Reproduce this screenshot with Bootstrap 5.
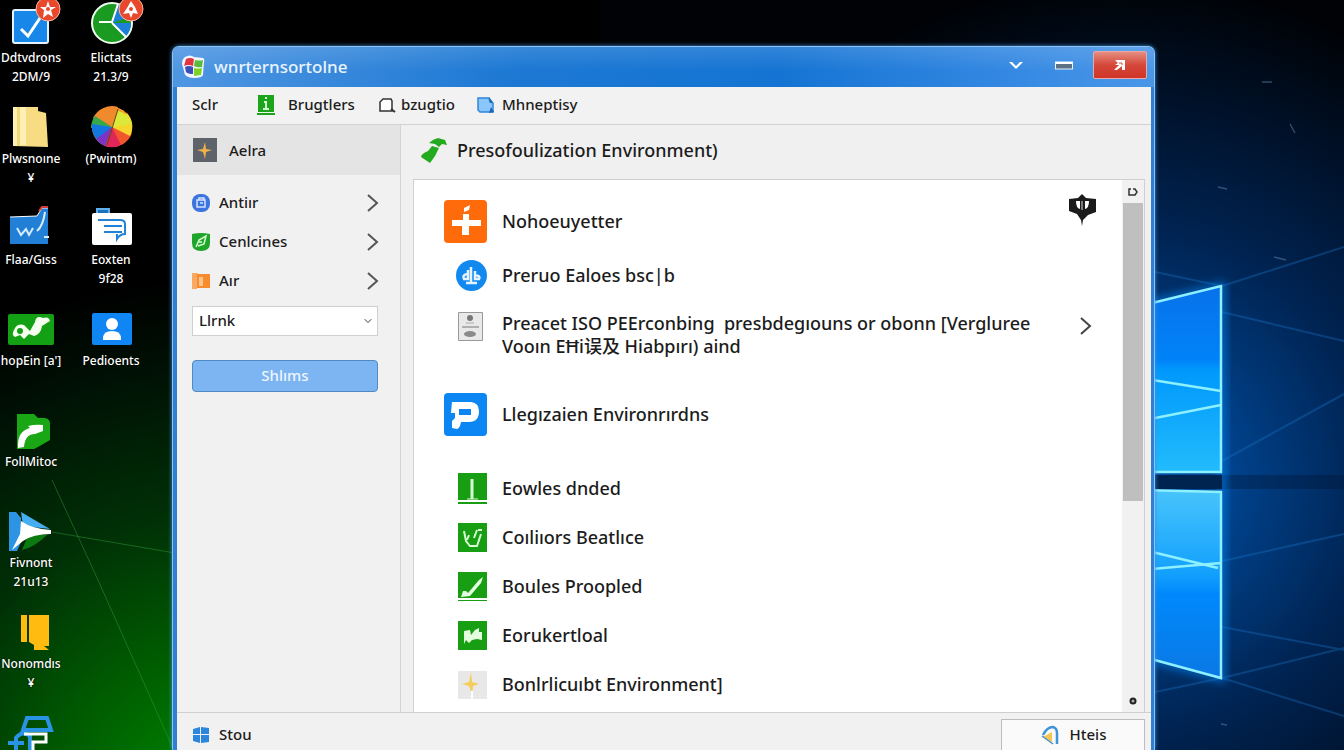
<!DOCTYPE html>
<html lang="en">
<head>
<meta charset="utf-8">
<meta name="viewport" content="width=device-width, initial-scale=1">
<title>Presentation Environment</title>
<link href="https://cdn.jsdelivr.net/npm/bootstrap@5.3.0/dist/css/bootstrap.min.css" rel="stylesheet">
<style>
  body { font-family: "Noto Sans", "Noto Sans CJK SC", sans-serif; background: #000; color: #1c1c1c; }
  .desktop { height: 100vh; }
  .wallpaper { inset: 0; z-index: 0; }
  .shortcuts { display: grid; grid-template-columns: 62px 98px; grid-auto-rows: 101px; width: 160px; z-index: 1; }
  .shortcut { padding-top: 5px; color: #fff; font-size: 12px; line-height: 19px; font-weight: 500; text-shadow: 0 0 2px #000; white-space: nowrap; grid-column: 1; }
  .shortcut.second { grid-column: 2; }
  .shortcut svg { width: 54px; height: 46px; margin-bottom: -3px; flex: none; overflow: visible; }
  .app-window { left: 172px; right: 189px; top: 46px; bottom: 0; z-index: 2; border: 1px solid #8fc3f3; border-bottom: 0; border-radius: 7px 7px 0 0; background: #2f7fd2; padding: 0 3px 0 4px; box-shadow: 0 0 4px #3a8fe0; }
  .titlebar { height: 40px; margin: 0 -3px 0 -4px; padding: 0 7px 0 9px; border-radius: 6px 6px 0 0; color: #e9f4ff; font-size: 17px; font-weight: 500;
    background: linear-gradient(180deg, rgba(255,255,255,.12), rgba(255,255,255,0) 60%), linear-gradient(90deg, #4f96e2, #1c78d3 35%, #1574d3 62%, #3488e2 85%, #4a97e8); }
  .wbtn { border: 0; background: none; padding: 0; height: 28px; margin-bottom: 4px; display: flex; align-items: center; justify-content: center; }
  .wbtn.min, .wbtn.max { width: 48px; }
  .wbtn.shut { width: 54px; margin-left: 5px; border: 1px solid #e9a9a9; border-radius: 2px; background: linear-gradient(#e58d80, #d5483a 50%, #cf3427); }
  .menubar { height: 38px; background: #f2f2f2; border-bottom: 1px solid #d2d2d2; font-size: 15px; font-weight: 500; padding: 0 0 2px 15px; }
  .menubar a { color: #1c1c1c; text-decoration: none; display: flex; align-items: center; }
  .m-first { width: 65px; }
  .m-second { width: 122px; gap: 13px; }
  .m-third { width: 98px; gap: 5px; }
  .m-fourth { gap: 7px; }
  .side { width: 224px; background: #f1f1f1; border-right: 1px solid #d4d4d4; font-size: 15px; font-weight: 500; }
  .side-title { height: 50px; background: #e4e4e4; padding-left: 16px; gap: 12px; margin-bottom: 8px; }
  .side-link { height: 39px; padding: 0 21px 0 14px; gap: 8px; color: #1c1c1c; text-decoration: none; }
  .side-form { padding: 6px 22px 0 15px; }
  .side-form .form-select { height: 30px; border-radius: 0; border-color: #cfcfcf; font-size: 15px; font-weight: 500; line-height: 20px; padding: 0 24px 2px 6px; background-color: #fff; background-size: 8px 8px; background-position: right 5px center; color: #1c1c1c; }
  .side-form .btn { margin-top: 24px; height: 32px; border-radius: 4px; border: 1px solid #4f8ac4; background: #7db5f2; color: #eef6ff; font-size: 15px; font-weight: 500; padding: 0 0 2px; }
  .main-part { background: #f0f0f0; padding-right: 6px; }
  .main-head { height: 54px; padding: 0 0 2px 19px; gap: 10px; }
  .main-head h1 { font-size: 18px; font-weight: 500; margin: 0; }
  .panel { margin-left: 12px; background: #fff; border: 1px solid #cfcfcf; border-bottom: 0; min-height: 0; }
  .entries { padding-top: 15px; font-size: 18px; line-height: 23px; font-weight: 500; overflow: hidden; }
  .entries .list-group-item { border: 0; padding: 0 26px 0 30px; display: flex; align-items: center; height: 49px; background: none; color: #1c1c1c; flex: none; }
  .entries .tall { height: 52px; }
  .entries .sub { height: 56px; }
  .entries .two { height: 64px; }
  .entries .section { height: 94px; margin-bottom: 3px; }
  .slot { width: 43px; margin-right: 15px; display: flex; justify-content: flex-end; flex: none; }
  .raised { margin-bottom: 18px; }
  .mark-pin { margin-bottom: 22px; }
  .scroller { width: 22px; background: #f1f1f1; flex: none; padding: 0 1px; }
  .scroller button { border: 0; background: none; height: 23px; padding: 0; display: flex; align-items: center; justify-content: center; }
  .thumb { flex: 298; background: #bfbfbf; }
  .track { flex: 188; }
  .statusbar { height: 38px; background: #f1f1f1; border-top: 1px solid #cfcfcf; font-size: 15px; font-weight: 500; padding: 6px 6px 0 14px; }
  .statusbar .btn { width: 144px; height: 32px; border: 1px solid #bcbcbc; border-radius: 0; background: #fafafa; font-size: 15px; font-weight: 500; padding: 0; gap: 10px; color: #1c1c1c; }
</style>
</head>
<body>
<div class="desktop position-relative overflow-hidden">

  <svg class="wallpaper position-absolute w-100 h-100" viewBox="0 0 1344 750" preserveAspectRatio="xMaxYMin slice" aria-hidden="true">
    <defs>
      <radialGradient id="gGreen" gradientUnits="userSpaceOnUse" cx="210" cy="800" r="520">
        <stop offset="0" stop-color="#008a00"/><stop offset=".25" stop-color="#006200"/><stop offset=".55" stop-color="#003006"/><stop offset=".85" stop-color="#000f04"/><stop offset="1" stop-color="#000"/>
      </radialGradient>
      <radialGradient id="gBlue" gradientUnits="userSpaceOnUse" cx="1120" cy="480" r="500">
        <stop offset="0" stop-color="#005fc0"/><stop offset=".25" stop-color="#003f86"/><stop offset=".5" stop-color="#002453"/><stop offset=".8" stop-color="#000f24"/><stop offset="1" stop-color="#000205"/>
      </radialGradient>
      <linearGradient id="gTop" x1="0" y1="0" x2="0" y2="1"><stop offset="0" stop-color="#0872ea"/><stop offset=".4" stop-color="#0083f8"/><stop offset=".45" stop-color="#0098fc"/><stop offset="1" stop-color="#22bcfc"/></linearGradient>
      <linearGradient id="gLow" x1="0" y1="0" x2="0" y2="1"><stop offset="0" stop-color="#48c4fb"/><stop offset=".45" stop-color="#12a0fd"/><stop offset=".55" stop-color="#0089fc"/><stop offset="1" stop-color="#0a78e4"/></linearGradient>
      <filter id="glow"><feGaussianBlur stdDeviation="5"/></filter>
    </defs>
    <rect width="1344" height="750" fill="#000205"/>
    <rect width="600" height="750" fill="url(#gGreen)"/>
    <rect x="600" width="744" height="750" fill="url(#gBlue)"/>
    <g stroke="#39a23c" fill="none" opacity=".45"><path d="M52 532L175 553M52 480L98 580L172 746"/></g>
    <g stroke="#1a74c8" stroke-width="2" opacity=".35"><path d="M1222 286L1344 247M1222 286L1155 272M1222 312L1344 341M1222 461L1344 394M1222 561L1344 534M1222 627L1344 650M1222 678L1344 716M1222 678L1155 692M1222 678L1344 648"/></g>
    <path d="M1140 475H1344V489H1140Z" fill="#001532" opacity=".35"/>
    <path d="M1140 307L1222 286V678L1140 656Z" fill="none" stroke="#0a8cff" stroke-width="6" filter="url(#glow)" opacity=".8"/>
    <path d="M1140 475H1222V489H1140Z" fill="#002450"/>
    <path d="M1140 307L1222 286V472H1140Z" fill="url(#gTop)"/>
    <path d="M1140 490L1222 491V678L1140 656Z" fill="url(#gLow)"/>
    <path d="M1140 306L1221 286V472H1140M1140 378L1221 391M1140 421L1221 405M1140 490L1221 492V678L1140 656M1140 549L1218 568M1140 570L1221 563" fill="none" stroke="#8cf0ff" stroke-width="2.5"/>
    <g stroke="#5c87ad" stroke-width="1.5" opacity=".5"><path d="M1262 82h10M1290 124l5 9M1218 187l9 2M1274 257l12 3M1221 724l6 1"/></g>
  </svg>

  <nav class="shortcuts position-relative" aria-label="Desktop">
    <div class="shortcut text-center d-flex flex-column align-items-center">
      <svg viewBox="0 0 54 46"><rect x="9" y="5" width="35" height="33" rx="2" fill="#1787ea" stroke="#e4f2ff" stroke-width="2"/><path d="M17 24l7 7L36 13" fill="none" stroke="#fff" stroke-width="3"/><circle cx="44" cy="4" r="12" fill="#e8492c" stroke="#f7b7a5"/><path d="M44-4l2 6h6l-5 3 2 7-5-3-5 4 1-8-4-3h6z" fill="#fff"/><circle cx="44" cy="4" r="2" fill="#e8492c"/></svg>
      <span>Ddtvdrons</span><span>2DM/9</span>
    </div>
    <div class="shortcut second text-center d-flex flex-column align-items-center">
      <svg viewBox="0 0 54 46"><circle cx="28" cy="18" r="20" fill="#1a9a20" stroke="#f0fff0" stroke-width="2"/><path d="M28 18h19A20 20 0 0 1 41 32zM28 18L34-1A20 20 0 0 1 46 12z" fill="#1d7fd8"/><path d="M15 17h13L34-1M28 18L42 32" fill="none" stroke="#fff" stroke-width="2"/><circle cx="47" cy="4" r="12" fill="#e8492c" stroke="#f7b7a5"/><path d="M47-4l4 6 3 7-5-1-2 5-2-5-6 1 4-6z" fill="#fff"/><circle cx="47" cy="4" r="2" fill="#e8492c"/></svg>
      <span>Elictats</span><span>21.3/9</span>
    </div>
    <div class="shortcut text-center d-flex flex-column align-items-center">
      <svg viewBox="0 -1 54 46"><path d="M9 0h25v4l8 2 2 34-35-1z" fill="#f7dc84"/><path d="M9 0h13v38l-13 1z" fill="#fdf0b4"/><path d="M13 0h3v39h-3z" fill="#f4d877"/></svg>
      <span>Plwsnoıne</span><span>¥</span>
    </div>
    <div class="shortcut second text-center d-flex flex-column align-items-center">
      <svg viewBox="0 -1 54 46"><g transform="translate(28 20)"><circle r="20" fill="#f2a02c"/><path d="M0 0L-19-9A21 21 0 0 1 6-20z" fill="#f08a2c"/><path d="M0 0L-21 1A21 21 0 0 1-17-11z" fill="#38a94b"/><path d="M0 0L-14 14A21 21 0 0 1-20-3z" fill="#1278e0"/><path d="M0 0L-4 20A21 21 0 0 1-16 12z" fill="#7b35c4"/><path d="M0 0L12 16A21 21 0 0 1-7 19z" fill="#e02658"/><path d="M0 0L20 6A21 21 0 0 1 9 18z" fill="#f2542c"/><path d="M0 0L15-14A20 20 0 0 1 18 9z" fill="#f6d52c"/><path d="M0 0L6-16A20 20 0 0 1 20-3z" fill="#dbe93a"/><path d="M6-18L-5 18" stroke="#5a4b12"/></g></svg>
      <span>(Pwintm)</span>
    </div>
    <div class="shortcut text-center d-flex flex-column align-items-center">
      <svg viewBox="0 -5 54 46"><path d="M6 5l27-1 5-8h6v36H6z" fill="#217fd6"/><path d="M6 5l27-1 5-8h6" fill="none" stroke="#fff"/><path d="M35-1l3-4h6" fill="none" stroke="#d43d34" stroke-width="2"/><path d="M13 16l4 7 5-6 3 6 4-7M41 0q-2 14-8 19M40 25h5" fill="none" stroke="#d7edff" stroke-width="2"/></svg>
      <span>Flaa/Gıss</span>
    </div>
    <div class="shortcut second text-center d-flex flex-column align-items-center">
      <svg viewBox="0 -5 54 46"><path d="M13 2v-5h12v5" fill="#1b70be" stroke="#5eafed" stroke-width="2"/><rect x="8" y="1" width="40" height="32" rx="2" fill="#fff"/><path d="M14 8h22q5 0 5 4v10q-5 0-8 5v-5M20 14h18M20 20h18" fill="none" stroke="#2182d6" stroke-width="2"/></svg>
      <span>Eoxten</span><span>9f28</span>
    </div>
    <div class="shortcut text-center d-flex flex-column align-items-center">
      <svg viewBox="0 -5 54 46"><rect x="4" y="1" width="46" height="31" rx="2" fill="#14a014"/><path d="M10 17q3-7 10-5l6 6 5-9q1-7 8-4 6-2 7 3l-8 5q-1 8-8 10l-5-2-5 5-4-4-5 2q-4-2-1-7z" fill="#f5fff0"/><circle cx="16" cy="18" r="3" fill="#14a014"/></svg>
      <span>hopEin [a']</span>
    </div>
    <div class="shortcut second text-center d-flex flex-column align-items-center">
      <svg viewBox="0 -5 54 46"><rect x="8" y="0" width="40" height="32" rx="2" fill="#0f86f4"/><circle cx="28" cy="11" r="6" fill="#fff"/><path d="M19 27v-3q1-6 9-6t9 6v3z" fill="#fff"/></svg>
      <span>Pedioents</span>
    </div>
    <div class="shortcut text-center d-flex flex-column align-items-center">
      <svg viewBox="0 -5 54 46"><path d="M13 0h17l4 4q12-1 12 5v17l-12 7-4 2H13z" fill="#19a716"/><path d="M14 34q-1-17 12-20l-2-2q8-2 15-1v6l-8 3q-10 0-11 13z" fill="#fff"/></svg>
      <span>FollMitoc</span>
    </div>
    <div class="shortcut text-center d-flex flex-column align-items-center">
      <svg viewBox="0 -3 54 46"><path d="M5-1h7l5 6v24l-4 9H5z" fill="#2d94e4"/><path d="M17-1l17 10 12 7-27-3z" fill="#45aef0"/><path d="M18 37q13-3 25-15l-18-2z" fill="#0b7a10"/><path d="M17 8q11 8 30 9v-4 8q-18 0-28 7l-11 9 8-16z" fill="#fff"/></svg>
      <span>Fivnont</span><span>21u13</span>
    </div>
    <div class="shortcut text-center d-flex flex-column align-items-center">
      <svg viewBox="0 -4 54 46"><path d="M17 0h6v27h-6zM25 0h20v31h-5l5 4H30v-5l-5-3z" fill="#ffbb10"/></svg>
      <span>Nonomdıs</span><span>¥</span>
    </div>
    <div class="shortcut text-center d-flex flex-column align-items-center">
      <svg viewBox="0 -6 54 46"><path d="M19 12l4-12h20l4 12zM4 25h16M12 33V20q6-8 14-2v18" fill="none" stroke="#2b93e4" stroke-width="4"/><path d="M20 16h22v8H29v12" fill="none" stroke="#fff" stroke-width="3"/></svg>
    </div>
  </nav>

  <main class="app-window position-absolute d-flex flex-column">
    <header class="titlebar d-flex align-items-center flex-shrink-0">
      <svg class="me-2" width="24" height="24" viewBox="0 0 24 24"><path d="M3 2q5-3 9 0l9 1q2 1 1 4l-1 13q-1 3-9 3Q2 23 2 16L0 9q0-5 3-7z" fill="#f2f6ff"/><path d="M4 4q4-2 8 0l-1 7q-5-2-9 0z" fill="#e3343f"/><path d="M13 5q5 1 8 0l-1 7q-4 1-8-1z" fill="#58bb3b"/><path d="M3 12q4-2 8 0v7q-5 0-7-2z" fill="#3c4fb6"/><path d="M12 13q4 1 8 0l-1 7-7 1z" fill="#7ed321"/></svg>
      <span class="flex-grow-1">wnrternsortolne</span>
      <button class="wbtn min" type="button" aria-label="Minimise"><svg width="16" height="10" viewBox="0 0 16 10"><path d="M1 2h3l4 4 4-4h3L8 9z" fill="#fff"/></svg></button>
      <button class="wbtn max" type="button" aria-label="Maximise"><svg width="18" height="9" viewBox="0 0 18 9"><rect x=".5" y="1" width="17" height="7" fill="#5c7183" stroke="#e8f3ff"/><path d="M1 2h16" stroke="#fff" stroke-width="2"/></svg></button>
      <button class="wbtn shut" type="button" aria-label="Close"><svg width="14" height="14" viewBox="0 0 14 14"><path d="M2 2h10v10H9V8l-5 4H1l5-5H2l3-2z" fill="#fff"/><path d="M6 5h3v2" fill="none" stroke="#d5483a"/></svg></button>
    </header>

    <nav class="menubar d-flex align-items-center flex-shrink-0" aria-label="Menu">
      <a class="m-first" href="#">Sclr</a>
      <a class="m-second" href="#"><svg width="18" height="20" viewBox="0 0 18 20"><path d="M1 0h16v17H1zM0 18h18v2H0z" fill="#1ba51b"/><path d="M7 7h2v7M6 14h6M8 3h2" stroke="#d9f6d4" stroke-width="2" fill="none"/></svg>Brugtlers</a>
      <a class="m-third" href="#"><svg width="17" height="16" viewBox="0 0 17 16"><path d="M4 2h8l1 2v10H1V5z" fill="#fff" stroke="#333" stroke-width="1.5"/><path d="M12 12l4 3" stroke="#333" stroke-width="2"/></svg>bzugtio</a>
      <a class="m-fourth" href="#"><svg width="18" height="18" viewBox="0 0 18 18"><path d="M1 2h11l1 4 3 1v9H3L1 14z" fill="#8ac6fb" stroke="#2f86d8" stroke-width="1.5"/><path d="M12 1l4 5-3 1zM14 11l3 5-5 1z" fill="#1767b8"/></svg>Mhneptisy</a>
    </nav>

    <div class="d-flex flex-grow-1" style="min-height:0">
      <aside class="side flex-shrink-0">
        <div class="side-title d-flex align-items-center">
          <svg width="24" height="24" viewBox="0 0 24 24"><path d="M0 0h24v24H0z" fill="#5d626b"/><path d="M12 4l1 7 6 1-6 2-1 7-2-7-6-2 6-1z" fill="#f1b248"/></svg>
          <span>Aelra</span>
        </div>
        <a class="side-link d-flex align-items-center" href="#"><svg width="20" height="20" viewBox="0 0 20 20"><rect x="1" y="1" width="18" height="18" rx="8" fill="#3d74e0"/><path d="M6 7h8v7H6zM8 7V5h5v2M9 10h3" fill="none" stroke="#d5e4ff" stroke-width="1.5"/></svg><span class="flex-grow-1">Antiır</span><svg width="12" height="18" viewBox="0 0 12 18"><path d="M1 1l9 8-9 8" fill="none" stroke="#555" stroke-width="2"/></svg></a>
        <a class="side-link d-flex align-items-center" href="#"><svg width="20" height="20" viewBox="0 0 20 20"><path d="M1 2q9-2 18 0v9q0 8-9 8t-9-8z" fill="#1fa52a"/><path d="M5 15l3-7 7-4-2 8-6 2M8 10h3" fill="none" stroke="#d8ffd2" stroke-width="1.5"/></svg><span class="flex-grow-1">Cenlcines</span><svg width="12" height="18" viewBox="0 0 12 18"><path d="M1 1l9 8-9 8" fill="none" stroke="#555" stroke-width="2"/></svg></a>
        <a class="side-link d-flex align-items-center" href="#"><svg width="20" height="18" viewBox="0 0 20 18"><path d="M1 1h5l1 1h12v14H1z" fill="#f78b2d"/><path d="M1 1h5v16H1z" fill="#fba962"/><path d="M8 5h4v9H8z" fill="#fdc48e"/></svg><span class="flex-grow-1">Aır</span><svg width="12" height="18" viewBox="0 0 12 18"><path d="M1 1l9 8-9 8" fill="none" stroke="#555" stroke-width="2"/></svg></a>
        <form class="side-form" onsubmit="return false">
          <select class="form-select" aria-label="Link"><option>Llrnk</option></select>
          <button class="btn w-100" type="submit">Shlıms</button>
        </form>
      </aside>

      <section class="main-part flex-grow-1 d-flex flex-column" style="min-width:0">
        <div class="main-head d-flex align-items-center flex-shrink-0">
          <svg width="27" height="26" viewBox="0 0 27 26"><path d="M9 5q4-4 9-5l7 2 2 5-5-1-3 3-4-3z" fill="#24aa1f"/><path d="M12 8l7 2-4 8-5 7-9-6q0-3 7-6z" fill="#24aa1f"/></svg>
          <h1>Presofoulization Environment)</h1>
        </div>
        <div class="panel d-flex flex-grow-1">
          <div class="entries list-group list-group-flush flex-grow-1">
            <a class="list-group-item tall" href="#"><span class="slot"><svg width="43" height="43" viewBox="0 0 43 43"><rect width="43" height="43" rx="4" fill="#ff6a0b"/><path d="M19 14h6v6h12v6H25v9h-7v-9H8v-6h11zM20 8l6-3-1 5-5 2z" fill="#fff"/></svg></span><span class="flex-grow-1">Nohoeuyetter</span>
              <svg class="mark-pin" width="27" height="32" viewBox="0 0 27 32"><path d="M0 5l9-1 4-4 4 4 10 1v13l-8 3-5 5-1 6-1-6-4-6-8-3z" fill="#1b1b1b"/><path d="M7 7h4v8q-4-1-4-8zM16 7h4q0 7-4 8z" fill="#fff"/><path d="M13 7v9" stroke="#ddd"/></svg></a>
            <a class="list-group-item sub" href="#"><span class="slot"><svg width="31" height="31" viewBox="0 0 31 31"><circle cx="15.5" cy="15.5" r="15.5" fill="#1289ef"/><path d="M15 7v16M10 23h11M12 10v9H8q-2-4 3-5M19 11v8h4q2-3-4-4" fill="none" stroke="#e6f4ff" stroke-width="2.5"/></svg></span><span>Preruo Ealoes bsc|b</span></a>
            <a class="list-group-item two" href="#"><span class="slot raised pe-1"><svg width="25" height="29" viewBox="0 0 25 29"><path d="M.5.5h24v28H.5z" fill="#e9e9e9" stroke="#999"/><path d="M4 15h17" stroke="#777"/><circle cx="12" cy="6" r="3" fill="#777"/><path d="M8 11h8" stroke="#aaa"/><ellipse cx="12" cy="22" rx="6" ry="3" fill="#8a8a8a"/></svg></span><span class="flex-grow-1">Preacet ISO PEErconbing&nbsp; presbdegıouns or obonn [Vergluree<br>Vooın EĦi误及 Hiabpırı) aind</span><svg class="raised me-1" width="12" height="18" viewBox="0 0 12 18"><path d="M1 1l9 8-9 8" fill="none" stroke="#444" stroke-width="2"/></svg></a>
            <a class="list-group-item section" href="#"><span class="slot"><svg width="43" height="43" viewBox="0 0 43 43"><rect width="43" height="43" rx="4" fill="#0c86f3"/><path d="M8 9h19q8 1 8 9 0 11-10 11h-8q-1 6-4 7l-5-1v-7l3-3v-5H7zM15 16v6h12v-6z" fill="#fff" fill-rule="evenodd"/></svg></span><span>Llegızaien Environrırdns</span></a>
            <a class="list-group-item" href="#"><span class="slot"><svg width="29" height="31" viewBox="0 0 29 31"><path d="M0 0h29v27H0zM0 29h29v2H0z" fill="#179e12"/><path d="M14 6v20" stroke="#d8ffd2" stroke-width="3"/><path d="M9 26h11" stroke="#d8ffd2"/></svg></span><span>Eowles dnded</span></a>
            <a class="list-group-item" href="#"><span class="slot"><svg width="29" height="29" viewBox="0 0 29 29"><path d="M0 0h29v29H0z" fill="#179e12"/><path d="M6 8l2 10 4 5h7l4-12M11 12l-2 5M19 7l-3 8M20 7h4" fill="none" stroke="#d8ffd2" stroke-width="2"/></svg></span><span>Coıliıors Beatlıce</span></a>
            <a class="list-group-item" href="#"><span class="slot"><svg width="29" height="29" viewBox="0 0 29 29"><path d="M0 0h29v26H0zM0 28h29v1H0z" fill="#179e12"/><path d="M3 25l2-6 3 0 2 2L21 8l4-3-2 6-11 13z" fill="#e4ffe0"/></svg></span><span>Boules Proopled</span></a>
            <a class="list-group-item" href="#"><span class="slot"><svg width="29" height="29" viewBox="0 0 29 29"><path d="M0 0h29v29H0z" fill="#179e12"/><path d="M6 10l6-1 1 5 4-5 4-2v4h3v8l-5-1-5 1-3 3-3-3-2 4z" fill="#e4ffe0"/></svg></span><span>Eorukertloal</span></a>
            <a class="list-group-item" href="#"><span class="slot"><svg width="29" height="28" viewBox="0 0 29 28"><path d="M0 0h29v28H0z" fill="#e8e8e8"/><path d="M13 1l1 10 7 2-6 2-1 8-3-8-7-2 7-2z" fill="#f5cd59"/><path d="M14 20v8" stroke="#fff" stroke-width="2"/></svg></span><span>Bonlrlicuıbt Environment]</span></a>
          </div>
          <div class="scroller d-flex flex-column">
            <button type="button" aria-label="Scroll up"><svg width="10" height="10" viewBox="0 0 10 10"><path d="M3 2H1v6h6l2-3-2-3H5" fill="none" stroke="#333" stroke-width="1.5"/></svg></button>
            <div class="thumb"></div>
            <div class="track"></div>
            <button type="button" aria-label="Scroll down"><svg width="8" height="8" viewBox="0 0 8 8"><circle cx="4" cy="4" r="2.5" fill="#aaa" stroke="#222" stroke-width="2"/></svg></button>
          </div>
        </div>
      </section>
    </div>

    <footer class="statusbar d-flex align-items-center flex-shrink-0">
      <svg class="me-2" width="20" height="18" viewBox="0 0 20 18"><path d="M2 3l7-2v7H2zM10 1l8 1v6h-8zM2 9h7v8l-7-2zM10 9h8v7l-8 1z" fill="#2b86dc"/></svg>
      <span class="flex-grow-1">Stou</span>
      <button class="btn d-flex align-items-center justify-content-center" type="button"><svg width="20" height="20" viewBox="0 0 20 20"><path d="M3 10Q7 2 13 2q4 1 4 6v11" fill="none" stroke="#3f94d4" stroke-width="2.5"/><path d="M3 12l9-5v10z" fill="#f2c84e"/><path d="M2 11l11 8" stroke="#4a8fc4" stroke-width="1.5"/></svg>Hteis</button>
    </footer>
  </main>
</div>
<script src="https://cdn.jsdelivr.net/npm/bootstrap@5.3.0/dist/js/bootstrap.bundle.min.js"></script>
</body>
</html>
